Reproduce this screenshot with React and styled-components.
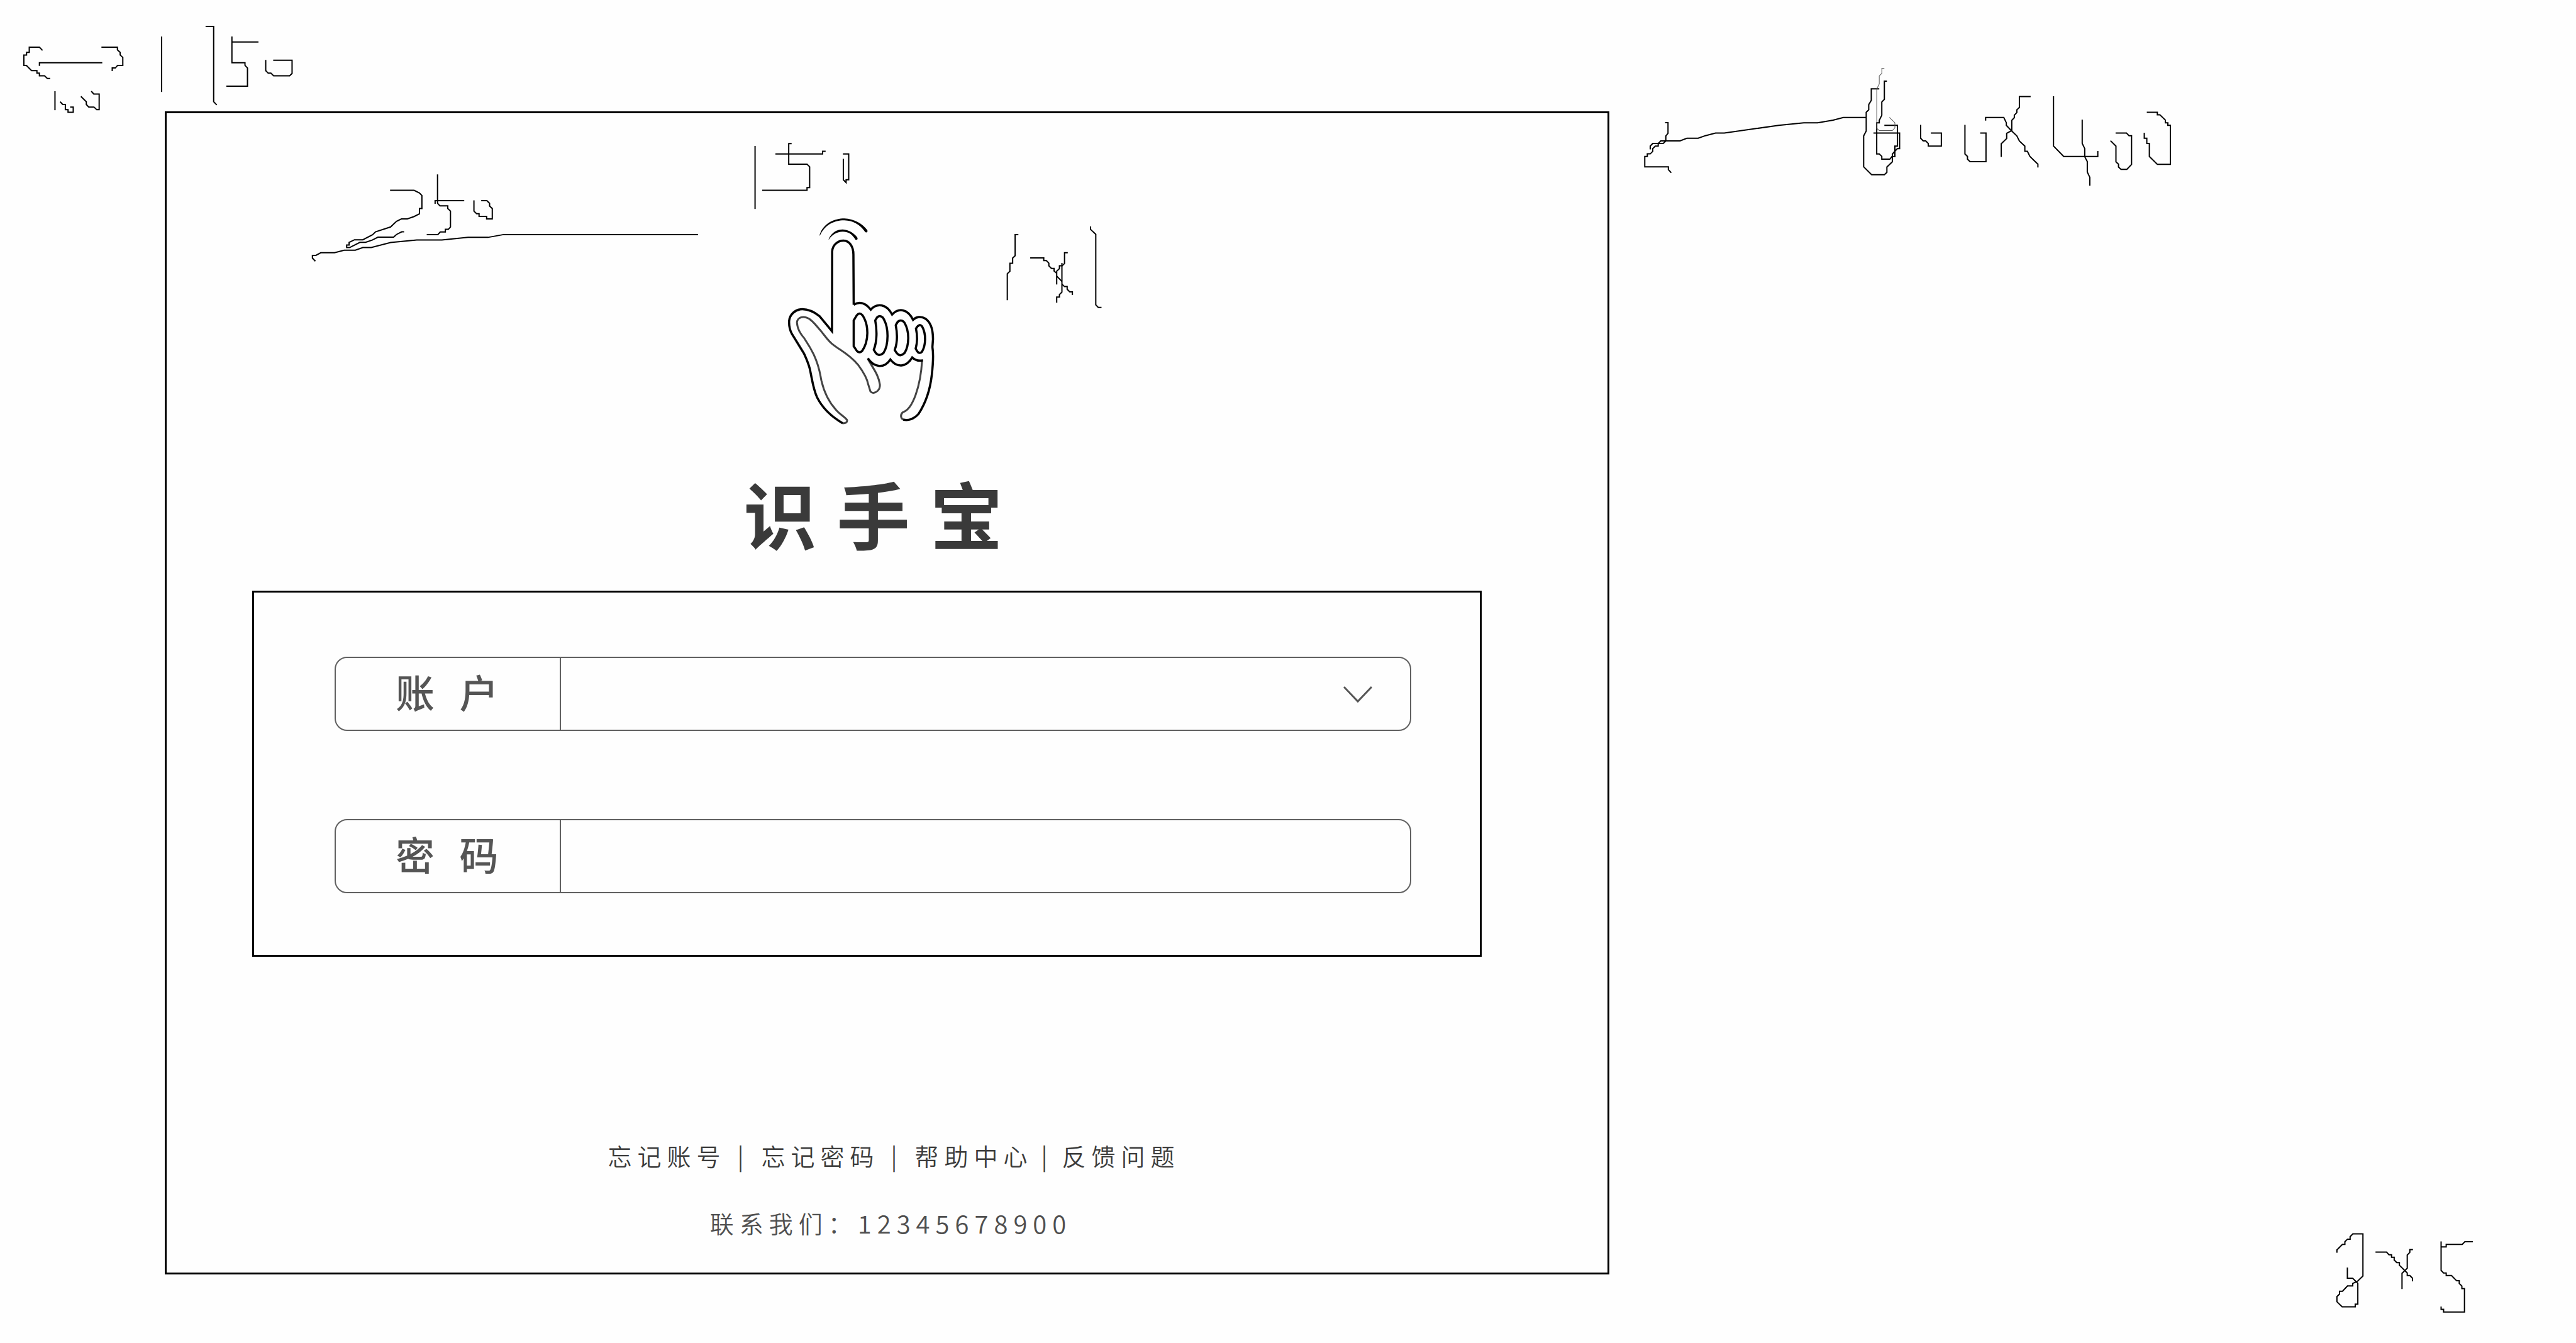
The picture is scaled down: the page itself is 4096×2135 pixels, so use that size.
import React from "react";
import styled, { createGlobalStyle } from "styled-components";

const INK = "#000000";
const SLATE = "#606060";

const GlobalStyle = createGlobalStyle`
  * { box-sizing: border-box; }
  body {
    margin: 0;
    background: #fefefe;
    font-family: "Liberation Sans", "Noto Sans CJK SC", sans-serif;
  }
`;

const Page = styled.main`
  position: relative;
  min-height: 100vh;
  display: grid;
  grid-template-columns: minmax(0, 1fr);
  align-items: start;
  padding: 177px 1537px 108px 262px;
`;

const Card = styled.section`
  display: flex;
  flex-direction: column;
  align-items: center;
  padding: 165px 200px 55px 136px;
  border: 3px solid ${INK};
`;

const Logo = styled.svg`
  width: 236px;
  height: 332px;
  margin-right: 20px;
  fill: none;
  stroke: ${INK};

  path { vector-effect: non-scaling-stroke; }
`;

const Title = styled.h1`
  margin: 88px 0 54px 20px;
  font-size: 116px;
  line-height: 120px;
  font-weight: 700;
  color: #3a3a3a;
`;

const LoginForm = styled.form`
  align-self: stretch;
  display: flex;
  flex-direction: column;
  gap: 140px;
  padding: 102px 109px 98px 128px;
  border: 3px solid ${INK};
`;

const Field = styled.div`
  position: relative;
  display: flex;
  height: 118px;
  border: 2px solid ${SLATE};
  border-radius: 20px;
`;

const FieldLabel = styled.label`
  flex: 0 0 358px;
  padding: 2px 0 0 95px;
  border-right: 2px solid ${SLATE};
  font-family: "DejaVu Sans", "Noto Sans CJK SC", sans-serif;
  font-size: 62px;
  line-height: 114px;
  font-weight: 500;
  white-space: pre;
  color: #555555;
`;

const control = `
  flex: 1;
  min-width: 0;
  padding: 0 40px;
  border: 0;
  outline: 0;
  background: transparent;
  appearance: none;
  font-family: inherit;
  font-size: 62px;
  color: #555555;
`;

const Select = styled.select`${control}`;
const Input = styled.input`${control}`;

const Chevron = styled.svg`
  position: absolute;
  top: 44px;
  right: 60px;
  width: 46px;
  height: 28px;
  fill: none;
  stroke: #555555;
  stroke-width: 3;
  pointer-events: none;
`;

const Footer = styled.footer`
  display: flex;
  flex-direction: column;
  align-items: center;
  gap: 59px;
  margin: 292px 0 0 86px;
  font-family: "Noto Sans CJK SC", sans-serif;
  font-size: 38px;
  font-weight: 350;
  line-height: 48px;
  letter-spacing: 9px;
`;

const Links = styled.nav`
  display: flex;
  color: #3c3c3c;
`;

const FooterLink = styled.a`
  color: inherit;
  text-decoration: none;
  white-space: nowrap;
`;

const Divider = styled.span`
  width: ${({ $tight }) => ($tight ? 46 : 56)}px;
  padding-right: 10px;
  text-align: center;
  letter-spacing: 0;
`;

const Contact = styled.p`
  display: flex;
  margin: 0;
  padding-right: 10px;
  color: #4f4f4f;
  white-space: nowrap;
`;

const Phone = styled.span`
  font-size: 40px;
`;

const PenMarks = styled.svg`
  position: absolute;
  top: 0;
  left: 0;
  width: 100%;
  fill: none;
  stroke: ${INK};
  stroke-width: 2px;
  pointer-events: none;

  path { vector-effect: non-scaling-stroke; }
`;

const HAIRLINE = { strokeWidth: 1, stroke: "#555555" };

const marks = [
  {
    place: "scale(0.63776 0.33333)",
    strokes: [
      "M205 465L190 435H141V483H128V507H115V603H127L152 651H178V675H190V699H215L228 723H242",
      "M190 607V579H493",
      "M489 435H566V460L579 483V507L592 530V603H567L556 627H541V656",
      "M265 841V1016",
      "M290 938L302 963H315V1011H328V1035H353V987H338",
      "M390 889L416 938V963L428 987H453L466 1011H478V867H452L440 841",
      "M779 337V848",
      "M991 243H1030V938L1045 968",
      "M1118 337V579H1181V603L1193 627V795H1091",
      "M1118 387H1246",
      "M1281 552V651L1293 675H1306L1319 699H1396L1408 677V555H1317",
    ],
  },
  {
    place: "translate(900 400) scale(0.82908 0.33333)",
    strokes: [
      "M361 555H450L470 580L479 603V723H470V772L450 797L425 819H403L385 841L363 893L307 938L296 965L260 1011H229L209 1035V1059H200V1083H211L249 1035H270L295 1014L316 987H374L385 962L404 938H413",
      "M84 1209L73 1180V1155H86L104 1131H155L191 1107H232L260 1083H291L363 1036L460 1013H553L650 989H724L782 963H1503",
      "M537 408V674L546 699H575V723L585 747V893L577 915H566V939H547L538 963H497",
      "M528 680V651H636",
      "M672 648V747L682 771H691V795H719V819H740V723L730 700V675L720 651H699",
    ],
  },
  {
    place: "translate(2250 400) scale(0.44643 0.60587)",
    strokes: [
      "M160 80V400",
      "M412 68H392V173H518L536 186V292H518V305H209",
      "M300 121H625V107H646",
      "M765 121H805V252H787V266L768 252V146",
    ],
  },
  {
    place: "translate(2950 600) scale(0.38265 0.33333)",
    strokes: [
      "M473 363H447V558L427 580V627H405V702L384 724V968",
      "M568 579H677V603H698L718 627V651L739 675H760V699L781 720",
      "M781 747L823 794",
      "M823 820L844 843H865V867L886 891H907V920",
      "M870 531H844V630L825 651H803V677L781 701V824",
      "M823 625V894L803 916V939H781V992",
      "M1053 289V315L1095 361V1011L1115 1035H1141",
    ],
  },
  {
    place: "translate(5000 150) scale(1.11607 0.33333)",
    strokes: [
      "M107 681H115V779L109 803V850L102 873H73L66 897V927",
      "M661 633H598L570 658L527 682H489L420 706L270 777H246L218 801L198 825H167L148 849H95L88 873V897H80L73 920V946L66 969H58V993H51V1088H116V1114L124 1143",
      "M697 369H675V475L668 515V563L661 585V758L654 803V1088L676 1161H711L718 1140V1090L733 1042V995H740V945L747 920H753V777H681",
      "M718 298H711V467L704 490V612L697 660V682H690V970H697L704 992V1018H726L733 990V970L740 945V897H747V706H711",
      "M811 702V825L818 849H825L832 873V897H868V777H839",
      "M933 702V970L940 993V1018L947 1041H991V777H975",
      "M990 662V633H1040L1047 682V706L1060 752L1076 803L1083 850L1098 897V945H1105L1112 993L1134 1064V1094",
      "M1114 441H1083V541L1076 563V588L1069 612V635L1062 660V755L1048 779V827L1033 875V998",
      "M1177 438V897L1205 993H1299V942",
      "M1256 654V873L1263 920V995L1270 1040V1136L1277 1185V1262",
      "M1334 847L1349 897V1042L1356 1064V1090L1363 1112H1379L1392 1066V801H1385L1378 777H1348",
      "M1427 774V825H1434V873H1441V993L1463 1065H1499V706H1492V682H1485V657L1470 609H1463V585H1434",
    ],
    hairlines: [
      "M711 179H704V227L697 250V325L690 370V733L697 754H733L740 730V682L725 633",
    ],
  },
  {
    place: "translate(7100 3700) scale(0.38265 0.33333)",
    strokes: [
      "M222 452V426L266 375H286V351L307 327H328V304L350 279H431V667L388 714L349 736V759H307L267 807H243V834L222 857V904L264 951H369V927H390V734L348 687H306V588",
      "M532 447H621L640 471H661V495H682V519L703 543H724V568L787 639V663H808L829 687V716",
      "M833 423H808V449L787 473V595L745 642V788",
      "M1059 348V615L1079 639H1100V663H1143L1184 711H1205V736L1226 759V783H1247V999H1079V975H1059V948",
      "M1059 399H1100V375H1229L1250 351H1314",
    ],
  },
];

function HandLogo() {
  return (
    <Logo viewBox="380 440 1020 1060" preserveAspectRatio="none" aria-hidden="true">
      <g fill={INK} stroke="none">
        <path d="M605 533C630 470 710 447 776 447C840 449 905 475 934 507Q938 518 926 518Q918 518 913 510C880 478 835 458 776 457C715 456 645 475 608 534Z" />
        <path d="M667 553C690 515 730 503 765 503C805 505 845 522 866 545Q869 555 858 556Q850 556 845 547C825 525 800 514 765 514C725 514 690 530 670 554Z" />
      </g>
      <g stroke="#444444" strokeWidth="3">
        <path d="M765 1487C782 1487 795 1483 795 1472C790 1460 750 1445 720 1420C670 1380 635 1325 618 1270C607 1230 605 1200 565 1137C530 1085 515 1075 500 1055C470 1030 452 1005 450 975C452 955 475 947 497 948C540 950 570 980 605 1010C640 1040 660 1065 690 1083C750 1120 800 1130 870 1190C895 1215 930 1250 940 1290L955 1325Q975 1342 1005 1322Q1022 1310 1020 1290C1010 1240 975 1210 937 1160" />
        <path d="M1180 1468C1160 1460 1160 1440 1180 1430C1245 1415 1300 1300 1310 1167" />
      </g>
      <g strokeWidth="3.5">
        <path d="M840 885L838 630C838 590 810 560 770 560C730 560 695 582 692 615L691 1020L605 943C565 920 530 908 487 908C440 908 395 935 396 975C396 1000 402 1015 415 1033L498 1132C515 1160 528 1180 538 1210C555 1265 560 1310 588 1355C625 1410 690 1455 765 1487" />
        <path d="M840 885C880 868 920 875 957 910C1000 875 1065 880 1104 935C1150 900 1210 905 1248 962C1290 930 1385 945 1385 1060L1381 1100C1390 1140 1387 1175 1377 1240C1365 1320 1330 1390 1285 1440C1255 1465 1215 1475 1180 1468" />
        <path d="M937 1157C980 1205 1050 1210 1092 1163C1135 1205 1200 1205 1242 1153C1265 1168 1290 1172 1316 1167" />
        <path d="M840 965L860 940Q880 920 902 940C945 990 945 1070 898 1120Q880 1133 862 1120L840 1096Z" />
        <path d="M988 965L1000 950Q1018 935 1040 950C1085 1000 1080 1090 1045 1130Q1015 1150 992 1130L978 1114C1002 1070 1000 1010 988 965Z" />
        <path d="M1129 989Q1140 972 1150 968Q1170 960 1188 975C1225 1020 1222 1090 1190 1130Q1160 1152 1137 1132L1122 1115C1142 1075 1140 1030 1129 989Z" />
        <path d="M1268 1006Q1290 978 1310 995C1340 1035 1335 1090 1310 1123Q1290 1138 1275 1120L1266 1108C1278 1075 1278 1040 1268 1006Z" />
      </g>
    </Logo>
  );
}

export default function App() {
  return (
    <>
      <GlobalStyle />
      <Page>
        <Card>
          <HandLogo />
          <Title>识 手 宝</Title>
          <LoginForm>
            <Field>
              <FieldLabel htmlFor="account">{"账  户"}</FieldLabel>
              <Select id="account" defaultValue="">
                <option value="" />
              </Select>
              <Chevron viewBox="0 0 46 28" aria-hidden="true">
                <path d="M1 2L23 25L45 2" />
              </Chevron>
            </Field>
            <Field>
              <FieldLabel htmlFor="password">{"密  码"}</FieldLabel>
              <Input id="password" type="password" />
            </Field>
          </LoginForm>
          <Footer>
            <Links>
              <FooterLink href="#account">忘记账号</FooterLink>
              <Divider>|</Divider>
              <FooterLink href="#password">忘记密码</FooterLink>
              <Divider>|</Divider>
              <FooterLink href="#help">帮助中心</FooterLink>
              <Divider $tight>|</Divider>
              <FooterLink href="#feedback">反馈问题</FooterLink>
            </Links>
            <Contact>
              联系我们：<Phone>12345678900</Phone>
            </Contact>
          </Footer>
        </Card>
        <PenMarks viewBox="0 0 7920 4128" aria-hidden="true">
          {marks.map(({ place, strokes, hairlines = [] }) => (
            <g key={place} transform={place}>
              {strokes.map((d) => (
                <path key={d} d={d} />
              ))}
              {hairlines.map((d) => (
                <path key={d} d={d} {...HAIRLINE} />
              ))}
            </g>
          ))}
        </PenMarks>
      </Page>
    </>
  );
}
